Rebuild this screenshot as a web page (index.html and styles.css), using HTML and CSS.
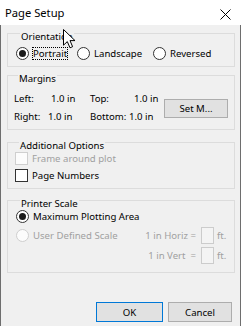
FILE: index.html
```html
<!DOCTYPE html>
<html>
<head>
<meta charset="utf-8">
<link rel="stylesheet" href="styles.css">
</head>
<body>
<div class="window">
  <div class="titlebar">
    <span class="title">Page Setup</span>
    <svg class="close" width="11" height="11" viewBox="0 0 11 11"><path d="M0.5 0.5 L10.5 10.5 M10.5 0.5 L0.5 10.5" stroke="#000" stroke-width="1" fill="none"/></svg>
  </div>
  <div class="content">
    <section class="group g-orient">
      <div class="group-title">Orientation</div>
      <div class="radio-row">
        <div class="radio checked"><span class="rb"></span><span class="rtext focus">Portrait</span></div>
        <div class="radio"><span class="rb"></span><span class="rtext">Landscape</span></div>
        <div class="radio"><span class="rb"></span><span class="rtext">Reversed</span></div>
      </div>
    </section>

    <section class="group g-margins">
      <div class="group-title">Margins</div>
      <div class="margins-body">
        <div class="mrows">
          <div class="mrow mrow1"><span>Left:</span><span>1.0 in</span><span>Top:</span><span>1.0 in</span></div>
          <div class="mrow mrow2"><span>Right:</span><span>1.0 in</span><span>Bottom:</span><span>1.0 in</span></div>
        </div>
        <div class="btn btn-setm">Set M...</div>
      </div>
    </section>

    <section class="group g-additional">
      <div class="group-title">Additional Options</div>
      <div class="check disabled"><span class="cb"></span><span>Frame around plot</span></div>
      <div class="check check2"><span class="cb"></span><span>Page Numbers</span></div>
    </section>

    <section class="group g-scale">
      <div class="group-title">Printer Scale</div>
      <div class="scale-grid">
        <div class="radio checked span-all"><span class="rb"></span><span class="rtext">Maximum Plotting Area</span></div>
        <div class="radio disabled row2"><span class="rb"></span><span class="rtext">User Defined Scale</span></div>
        <span class="ratio-label row2">1 in Horiz =</span>
        <span class="ratio-box row2"></span>
        <span class="ratio-unit row2">ft.</span>
        <span class="row3"></span>
        <span class="ratio-label row3">1 in Vert&nbsp; =</span>
        <span class="ratio-box row3"></span>
        <span class="ratio-unit row3">ft.</span>
      </div>
    </section>

    <div class="footer">
      <div class="btn btn-ok">OK</div>
      <div class="btn btn-cancel">Cancel</div>
    </div>
  </div>
  <svg class="cursor" width="14" height="20" viewBox="0 0 14 20"><path d="M0.5 0.5 V16.2 L4.3 12.6 L7 18.8 L9.6 17.7 L7 11.6 H12 Z" fill="#fff" stroke="#000" stroke-width="1" stroke-linejoin="miter"/></svg>
</div>
</body>
</html>
```

FILE: styles.css
```css
* { box-sizing: border-box; }
body {
  margin: 0;
  font-family: "Noto Sans", "Open Sans", sans-serif;
  font-size: 9.6px;
  color: #000;
  background: #f0f0f0;
}
.window {
  width: 241px;
  height: 326px;
  background: #f0f0f0;
  position: relative;
  overflow: hidden;
}
.titlebar {
  height: 25px;
  background: #fff;
  display: flex;
  align-items: center;
  justify-content: space-between;
  padding: 0 10px 0 5px;
}
.title {
  font-size: 11.2px;
  line-height: 15px;
}
.close {
  margin-top: 3px;
}
.content {
  height: 301px;
  border-left: 1px solid #6e6e6e;
  border-right: 1px solid #6e6e6e;
  padding: 0 5px 0 6px;
  overflow: hidden;
}
.group {
  border: 1px solid #dcdcdc;
  line-height: 13px;
}
.group-title {
  width: fit-content;
  margin: -4px 0 0 4px;
  padding: 0 1px;
  background: #f0f0f0;
  line-height: 13px;
}

/* orientation */
.g-orient {
  margin-top: 8px;
  padding: 0 0 6px 8px;
}
.radio-row {
  display: grid;
  grid-template-columns: 61px 76px auto;
  margin-top: 4px;
}
.radio {
  display: flex;
  align-items: center;
  gap: 3px;
  height: 13px;
}
.rb {
  width: 13px;
  height: 13px;
  border: 1px solid #333;
  border-radius: 50%;
  background: #fff;
  display: flex;
  align-items: center;
  justify-content: center;
  flex: none;
}
.radio.checked .rb::after {
  content: "";
  width: 7px;
  height: 7px;
  border-radius: 50%;
  background: #1a1a1a;
}
.rtext {
  border: 1px dotted transparent;
  line-height: 11px;
  white-space: nowrap;
}
.rtext.focus {
  border-color: #000;
}
.radio.disabled {
  color: #a0a0a0;
}
.radio.disabled .rb {
  border-color: #cfcfcf;
  background: #fcfcfc;
}

/* margins */
.g-margins {
  margin-top: 8px;
  padding: 0 6px 3px 6px;
}
.margins-body {
  display: flex;
  align-items: center;
  justify-content: space-between;
  margin-top: 5px;
}
.mrow {
  display: grid;
  line-height: 18px;
  white-space: nowrap;
}
.mrow1 { grid-template-columns: 37px 39px 44px auto; }
.mrow2 { grid-template-columns: 34px 42px 39px auto; }
.btn {
  background: #e1e1e1;
  border: 1px solid #adadad;
  display: flex;
  align-items: center;
  justify-content: center;
}
.btn-setm {
  width: 64px;
  height: 19px;
}

/* additional */
.g-additional {
  margin-top: 12px;
  padding: 0 0 6px 7px;
}
.check {
  display: flex;
  align-items: center;
  gap: 4px;
  height: 13px;
}
.check2 { margin-top: 4px; }
.cb {
  width: 13px;
  height: 13px;
  border: 1px solid #333;
  background: #fff;
  flex: none;
}
.check.disabled { color: #a0a0a0; }
.check.disabled .cb {
  border-color: #cfcfcf;
  background: #fcfcfc;
}

/* printer scale */
.g-scale {
  margin-top: 11px;
  padding: 0 0 8px 8px;
}
.scale-grid {
  display: grid;
  grid-template-columns: 128px 57px 16px auto;
  grid-template-rows: 13px 21px 20px;
  align-items: center;
}
.span-all { grid-column: 1 / -1; }
.row2 { grid-row: 2; margin-top: 4px; }
.row3 { grid-row: 3; margin-top: 3px; }
.ratio-label {
  color: #a0a0a0;
  text-align: right;
  padding-right: 5px;
  white-space: nowrap;
}
.ratio-box {
  width: 13px;
  height: 17px;
  border: 1px solid #cccccc;
  background: #f4f4f4;
}
.ratio-unit {
  color: #a0a0a0;
}

/* footer */
.footer {
  display: flex;
  justify-content: flex-end;
  gap: 5px;
  margin-top: 29px;
  padding-right: 3px;
}
.btn-ok {
  width: 67px;
  height: 20px;
  border-color: #0078d7;
}
.btn-cancel {
  width: 64px;
  height: 20px;
}

.cursor {
  position: absolute;
  left: 63px;
  top: 29px;
}
```
